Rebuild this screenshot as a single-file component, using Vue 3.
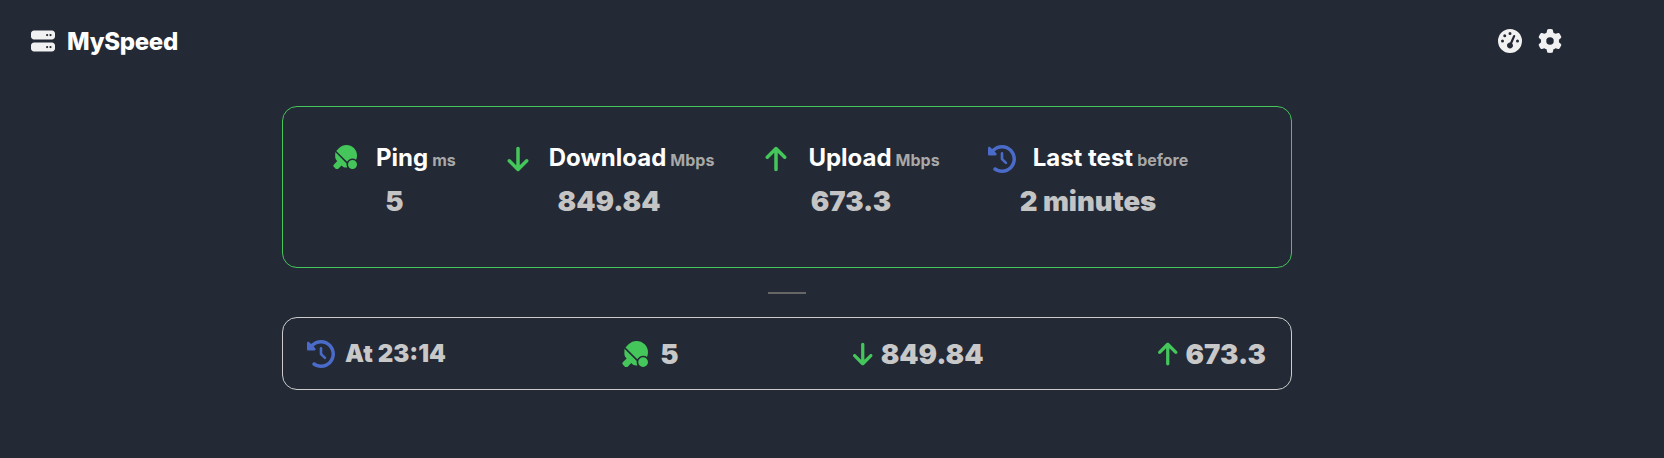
<script setup>
const icons = {
  server: { box: "0 0 512 512", d: "M64 32C28.7 32 0 60.7 0 96v64c0 35.3 28.7 64 64 64H448c35.3 0 64-28.7 64-64V96c0-35.3-28.7-64-64-64H64zm280 72a24 24 0 1 1 0 48 24 24 0 1 1 0-48zm48 24a24 24 0 1 1 48 0 24 24 0 1 1 -48 0zM64 288c-35.3 0-64 28.7-64 64v64c0 35.3 28.7 64 64 64H448c35.3 0 64-28.7 64-64V352c0-35.3-28.7-64-64-64H64zm280 72a24 24 0 1 1 0 48 24 24 0 1 1 0-48zm48 24a24 24 0 1 1 48 0 24 24 0 1 1 -48 0z" },
  gauge: { box: "0 0 512 512", d: "M0 256a256 256 0 1 1 512 0A256 256 0 1 1 0 256zM288 96a32 32 0 1 0 -64 0 32 32 0 1 0 64 0zM256 416c35.3 0 64-28.7 64-64c0-17.4-6.9-33.1-18.1-44.6L366 161.7c5.3-12.1-.2-26.3-12.3-31.6s-26.3 .2-31.6 12.3L257.9 288c-.6 0-1.3 0-1.9 0c-35.3 0-64 28.7-64 64s28.7 64 64 64zM176 144a32 32 0 1 0 -64 0 32 32 0 1 0 64 0zM96 288a32 32 0 1 0 0-64 32 32 0 1 0 0 64zm352-32a32 32 0 1 0 -64 0 32 32 0 1 0 64 0z" },
  gear: { box: "0 0 512 512", d: "M495.9 166.6c3.2 8.7 .5 18.4-6.4 24.6l-43.3 39.4c1.1 8.3 1.7 16.8 1.7 25.4s-.6 17.1-1.7 25.4l43.3 39.4c6.9 6.2 9.6 15.9 6.4 24.6c-4.4 11.9-9.7 23.3-15.8 34.3l-4.7 8.1c-6.6 11-14 21.4-22.1 31.2c-5.9 7.2-15.7 9.6-24.5 6.8l-55.7-17.7c-13.4 10.3-28.2 18.9-44 25.4l-12.5 57.1c-2 9.1-9 16.3-18.2 17.8c-13.8 2.3-28 3.5-42.5 3.5s-28.7-1.2-42.5-3.5c-9.2-1.5-16.2-8.7-18.2-17.8l-12.5-57.1c-15.8-6.5-30.6-15.1-44-25.4L83.1 425.9c-8.8 2.8-18.6 .3-24.5-6.8c-8.1-9.8-15.5-20.2-22.1-31.2l-4.7-8.1c-6.1-11-11.4-22.4-15.8-34.3c-3.2-8.7-.5-18.4 6.4-24.6l43.3-39.4C64.6 273.1 64 264.6 64 256s.6-17.1 1.7-25.4L22.4 191.2c-6.9-6.2-9.6-15.9-6.4-24.6c4.4-11.9 9.7-23.3 15.8-34.3l4.7-8.1c6.6-11 14-21.4 22.1-31.2c5.9-7.2 15.7-9.6 24.5-6.8l55.7 17.7c13.4-10.3 28.2-18.9 44-25.4l12.5-57.1c2-9.1 9-16.3 18.2-17.8C227.3 1.2 241.5 0 256 0s28.7 1.2 42.5 3.5c9.2 1.5 16.2 8.7 18.2 17.8l12.5 57.1c15.8 6.5 30.6 15.1 44 25.4l55.7-17.7c8.8-2.8 18.6-.3 24.5 6.8c8.1 9.8 15.5 20.2 22.1 31.2l4.7 8.1c6.1 11 11.4 22.4 15.8 34.3zM256 336a80 80 0 1 0 0-160 80 80 0 1 0 0 160z" },
  ping: { box: "0 0 512 512", d: "M416 288c-50.1 0-93.6 28.8-114.6 70.8L68.9 126.3l.6-.6 60.1-60.1c87.5-87.5 229.3-87.5 316.8 0c67.1 67.1 82.7 166.3 46.8 248.3C471.8 297.6 445 288 416 288zM49.3 151.9L290.1 392.7c-1.4 7.5-2.1 15.3-2.1 23.3c0 23.2 6.2 44.9 16.9 63.7c-3 .2-6.1 .3-9.2 .3H274.5c-29.7 0-58.2-11.8-79.2-32.8l-12.2-12.2-75.8 75.8c-12.5 12.5-32.8 12.5-45.3 0L16 464c-12.5-12.5-12.5-32.8 0-45.3l75.8-75.8-12.2-12.2C58.6 309.7 46.8 281.2 46.8 251.5V234.6c0-28.6 1-56 2.5-82.7zM416 320a96 96 0 1 1 0 192 96 96 0 1 1 0-192z" },
  down: { box: "0 0 384 512", d: "M169.4 470.6c12.5 12.5 32.8 12.5 45.3 0l160-160c12.5-12.5 12.5-32.8 0-45.3s-32.8-12.5-45.3 0L224 370.8 224 64c0-17.7-14.3-32-32-32s-32 14.3-32 32l0 306.7L54.6 265.4c-12.5-12.5-32.8-12.5-45.3 0s-12.5 32.8 0 45.3l160 160z" },
  up: { box: "0 0 384 512", d: "M214.6 41.4c-12.5-12.5-32.8-12.5-45.3 0l-160 160c-12.5 12.5-12.5 32.8 0 45.3s32.8 12.5 45.3 0L160 141.2V448c0 17.7 14.3 32 32 32s32-14.3 32-32V141.2L329.4 246.6c12.5 12.5 32.8 12.5 45.3 0s12.5-32.8 0-45.3l-160-160z" },
  history: { box: "0 0 512 512", d: "M75 75L41 41C25.9 25.9 0 36.6 0 57.9V168c0 13.3 10.7 24 24 24H134.1c21.4 0 32.1-25.9 17-41l-30.8-30.8C155 85.5 203 64 256 64c106 0 192 86 192 192s-86 192-192 192c-40.8 0-78.6-12.7-109.7-34.4c-14.5-10.1-34.4-6.6-44.6 7.9s-6.6 34.4 7.9 44.6C151.2 495 201.7 512 256 512c141.4 0 256-114.6 256-256S397.4 0 256 0C185.3 0 121.3 28.7 75 75zm181 53c-13.3 0-24 10.7-24 24V256c0 6.4 2.5 12.5 7 17l72 72c9.4 9.4 24.6 9.4 33.9 0s9.4-24.6 0-33.9l-65-65V152c0-13.3-10.7-24-24-24z" },
};

const stats = [
  { icon: "ping", color: "green", title: "Ping", unit: "ms", value: "5", head: "head-ping" },
  { icon: "down", color: "green", title: "Download", unit: "Mbps", value: "849.84", head: "head-down" },
  { icon: "up", color: "green", title: "Upload", unit: "Mbps", value: "673.3", head: "head-up" },
  { icon: "history", color: "blue", title: "Last test", unit: "before", value: "2 minutes", head: "head-last" },
];
</script>

<template>
  <div class="page">
    <header class="header">
      <div class="logo">
        <svg class="logo-icon" :viewBox="icons.server.box"><path :d="icons.server.d" /></svg>
        <span>MySpeed</span>
      </div>
      <div class="actions">
        <svg class="action" :viewBox="icons.gauge.box"><path :d="icons.gauge.d" /></svg>
        <svg class="action" :viewBox="icons.gear.box"><path :d="icons.gear.d" /></svg>
      </div>
    </header>

    <main class="content">
      <section class="card latest">
        <div v-for="s in stats" :key="s.title" class="stat">
          <div class="stat-head" :class="s.head">
            <svg class="stat-icon" :class="s.color" :viewBox="icons[s.icon].box"><path :d="icons[s.icon].d" /></svg>
            <h3>{{ s.title }}<span class="unit">{{ s.unit }}</span></h3>
          </div>
          <div class="stat-value">{{ s.value }}</div>
        </div>
      </section>

      <div class="divider"></div>

      <section class="card row">
        <div class="cell">
          <svg class="row-icon history blue" :viewBox="icons.history.box"><path :d="icons.history.d" /></svg>
          <span class="time">At 23:14</span>
        </div>
        <div class="cell ping">
          <svg class="row-icon small green" :viewBox="icons.ping.box"><path :d="icons.ping.d" /></svg>
          <span>5</span>
        </div>
        <div class="cell arrow">
          <svg class="row-icon green" :viewBox="icons.down.box"><path :d="icons.down.d" /></svg>
          <span>849.84</span>
        </div>
        <div class="cell arrow">
          <svg class="row-icon green" :viewBox="icons.up.box"><path :d="icons.up.d" /></svg>
          <span>673.3</span>
        </div>
      </section>
    </main>
  </div>
</template>

<style>
html,
body {
  background: #232935;
}
</style>

<style scoped>
.page {
  min-height: 458px;
  background: #232935;
  color: #fff;
  font-family: Inter, "Liberation Sans", sans-serif;
}

.header {
  display: flex;
  justify-content: space-between;
  align-items: center;
  height: 82px;
  padding: 0 102px 0 31px;
}

.logo {
  display: flex;
  align-items: center;
  gap: 12px;
  font-size: 24px;
  font-weight: 800;
  letter-spacing: -0.3px;
}

.logo-icon {
  width: 24px;
  height: 24px;
  fill: #f1f1f1;
}

.actions {
  display: flex;
  gap: 16px;
}

.action {
  width: 24px;
  height: 24px;
  fill: #f1f1f1;
}

.content {
  width: 1010px;
  margin: 24px 0 0 282px;
}

.card {
  box-sizing: border-box;
  border-radius: 15px;
  background: #232935;
}

.latest {
  display: flex;
  gap: 48px;
  height: 162px;
  padding: 36px 0 0 50px;
  border: 1px solid #45c65a;
}

.stat {
  display: flex;
  flex-direction: column;
  align-items: center;
}

.stat-head {
  display: flex;
  align-items: center;
}

.head-ping { gap: 19px; }
.head-down { gap: 17px; }
.head-up { gap: 18px; }
.head-last { gap: 17px; }

.stat-icon {
  width: 28px;
  height: 28px;
}

.head-ping .stat-icon {
  width: 24px;
  height: 24px;
  margin-top: -4px;
}

h3 {
  margin: 0;
  font-size: 24px;
  font-weight: 700;
  line-height: 30px;
}

.unit {
  margin-left: 4px;
  font-size: 16px;
  font-weight: 700;
  color: #a8a8a8;
}

.stat-value {
  margin-top: 9px;
  font-size: 27.5px;
  font-weight: 900;
  line-height: 34px;
  color: #c4c4c4;
}

.green { fill: #45c65a; }
.blue { fill: #4a6bc9; }

.divider {
  width: 38px;
  height: 2px;
  margin: 24px auto 23px;
  background: #666;
}

.row {
  display: flex;
  justify-content: space-between;
  align-items: center;
  height: 73px;
  padding: 0 25px 0 24px;
  border: 1px solid #ccc;
  font-size: 27.5px;
  font-weight: 900;
  color: #c8c8c8;
}

.cell {
  display: flex;
  align-items: center;
  gap: 10px;
}

.ping {
  gap: 12px;
  margin-left: 2px;
}

.arrow { gap: 8px; }

.row-icon {
  height: 26px;
  width: auto;
}

.row-icon.history {
  height: 28px;
}

.time {
  font-size: 24px;
}
</style>
